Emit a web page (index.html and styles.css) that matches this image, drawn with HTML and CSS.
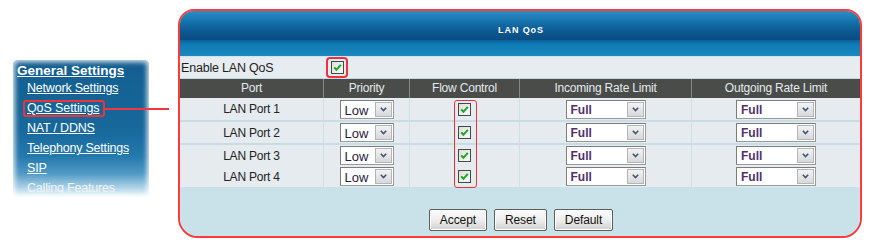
FILE: index.html
```html
<!DOCTYPE html>
<html>
<head>
<meta charset="utf-8">
<title>LAN QoS</title>
<link rel="stylesheet" href="styles.css">
</head>
<body>
<div class="page">
  <nav class="sidebar">
    <a class="nav-title">General Settings</a>
    <ul class="nav-list">
      <li><a>Network Settings</a></li>
      <li><a class="hl">QoS Settings<span class="callout"></span></a></li>
      <li><a>NAT / DDNS</a></li>
      <li><a>Telephony Settings</a></li>
      <li><a>SIP</a></li>
      <li><a class="faded">Calling Features</a></li>
    </ul>
  </nav>

  <section class="panel">
    <div class="panel-head"><h1>LAN QoS</h1></div>
    <div class="panel-band"></div>

    <div class="enable-row">
      <span class="enable-label">Enable LAN QoS</span>
      <span class="mark-box">
        <svg class="cb" width="13" height="13" viewBox="0 0 13 13"><defs><linearGradient id="cbg" x1="0" y1="0" x2="1" y2="1"><stop offset="0" stop-color="#dcdcd6"/><stop offset="1" stop-color="#fbfbfb"/></linearGradient></defs><rect x="0.5" y="0.5" width="12" height="12" fill="url(#cbg)" stroke="#3f4a4a"/><path d="M3.2 6.4 L5.4 8.8 L9.8 3.8" fill="none" stroke="#21a52a" stroke-width="2"/></svg>
      </span>
    </div>

    <div class="qos-table">
      <div class="th">Port</div>
      <div class="th">Priority</div>
      <div class="th">Flow Control</div>
      <div class="th">Incoming Rate Limit</div>
      <div class="th last">Outgoing Rate Limit</div>

      <div class="row r1">
        <div class="td port">LAN Port 1</div>
        <div class="td"><div class="sel sel-pri"><span class="val">Low</span><span class="arr"><svg width="7" height="5" viewBox="0 0 7 5"><path d="M0.8 0.8 L3.5 3.6 L6.2 0.8" fill="none" stroke="#44546a" stroke-width="1.6"/></svg></span></div></div>
        <div class="td"><svg class="cb" width="13" height="13" viewBox="0 0 13 13"><rect x="0.5" y="0.5" width="12" height="12" fill="url(#cbg)" stroke="#3f4a4a"/><path d="M3.2 6.4 L5.4 8.8 L9.8 3.8" fill="none" stroke="#21a52a" stroke-width="2"/></svg></div>
        <div class="td"><div class="sel sel-rate"><span class="val full">Full</span><span class="arr"><svg width="7" height="5" viewBox="0 0 7 5"><path d="M0.8 0.8 L3.5 3.6 L6.2 0.8" fill="none" stroke="#44546a" stroke-width="1.6"/></svg></span></div></div>
        <div class="td last"><div class="sel sel-rate"><span class="val full">Full</span><span class="arr"><svg width="7" height="5" viewBox="0 0 7 5"><path d="M0.8 0.8 L3.5 3.6 L6.2 0.8" fill="none" stroke="#44546a" stroke-width="1.6"/></svg></span></div></div>
      </div>

      <div class="row r2">
        <div class="td port">LAN Port 2</div>
        <div class="td"><div class="sel sel-pri"><span class="val">Low</span><span class="arr"><svg width="7" height="5" viewBox="0 0 7 5"><path d="M0.8 0.8 L3.5 3.6 L6.2 0.8" fill="none" stroke="#44546a" stroke-width="1.6"/></svg></span></div></div>
        <div class="td"><svg class="cb" width="13" height="13" viewBox="0 0 13 13"><rect x="0.5" y="0.5" width="12" height="12" fill="url(#cbg)" stroke="#3f4a4a"/><path d="M3.2 6.4 L5.4 8.8 L9.8 3.8" fill="none" stroke="#21a52a" stroke-width="2"/></svg></div>
        <div class="td"><div class="sel sel-rate"><span class="val full">Full</span><span class="arr"><svg width="7" height="5" viewBox="0 0 7 5"><path d="M0.8 0.8 L3.5 3.6 L6.2 0.8" fill="none" stroke="#44546a" stroke-width="1.6"/></svg></span></div></div>
        <div class="td last"><div class="sel sel-rate"><span class="val full">Full</span><span class="arr"><svg width="7" height="5" viewBox="0 0 7 5"><path d="M0.8 0.8 L3.5 3.6 L6.2 0.8" fill="none" stroke="#44546a" stroke-width="1.6"/></svg></span></div></div>
      </div>

      <div class="row r3">
        <div class="td port">LAN Port 3</div>
        <div class="td"><div class="sel sel-pri"><span class="val">Low</span><span class="arr"><svg width="7" height="5" viewBox="0 0 7 5"><path d="M0.8 0.8 L3.5 3.6 L6.2 0.8" fill="none" stroke="#44546a" stroke-width="1.6"/></svg></span></div></div>
        <div class="td"><svg class="cb" width="13" height="13" viewBox="0 0 13 13"><rect x="0.5" y="0.5" width="12" height="12" fill="url(#cbg)" stroke="#3f4a4a"/><path d="M3.2 6.4 L5.4 8.8 L9.8 3.8" fill="none" stroke="#21a52a" stroke-width="2"/></svg></div>
        <div class="td"><div class="sel sel-rate"><span class="val full">Full</span><span class="arr"><svg width="7" height="5" viewBox="0 0 7 5"><path d="M0.8 0.8 L3.5 3.6 L6.2 0.8" fill="none" stroke="#44546a" stroke-width="1.6"/></svg></span></div></div>
        <div class="td last"><div class="sel sel-rate"><span class="val full">Full</span><span class="arr"><svg width="7" height="5" viewBox="0 0 7 5"><path d="M0.8 0.8 L3.5 3.6 L6.2 0.8" fill="none" stroke="#44546a" stroke-width="1.6"/></svg></span></div></div>
      </div>

      <div class="row r4">
        <div class="td port">LAN Port 4</div>
        <div class="td"><div class="sel sel-pri"><span class="val">Low</span><span class="arr"><svg width="7" height="5" viewBox="0 0 7 5"><path d="M0.8 0.8 L3.5 3.6 L6.2 0.8" fill="none" stroke="#44546a" stroke-width="1.6"/></svg></span></div></div>
        <div class="td"><svg class="cb" width="13" height="13" viewBox="0 0 13 13"><rect x="0.5" y="0.5" width="12" height="12" fill="url(#cbg)" stroke="#3f4a4a"/><path d="M3.2 6.4 L5.4 8.8 L9.8 3.8" fill="none" stroke="#21a52a" stroke-width="2"/></svg></div>
        <div class="td"><div class="sel sel-rate"><span class="val full">Full</span><span class="arr"><svg width="7" height="5" viewBox="0 0 7 5"><path d="M0.8 0.8 L3.5 3.6 L6.2 0.8" fill="none" stroke="#44546a" stroke-width="1.6"/></svg></span></div></div>
        <div class="td last"><div class="sel sel-rate"><span class="val full">Full</span><span class="arr"><svg width="7" height="5" viewBox="0 0 7 5"><path d="M0.8 0.8 L3.5 3.6 L6.2 0.8" fill="none" stroke="#44546a" stroke-width="1.6"/></svg></span></div></div>
      </div>

      <div class="flow-mark"></div>
    </div>

    <div class="actions">
      <button class="btn">Accept</button>
      <button class="btn">Reset</button>
      <button class="btn">Default</button>
    </div>
  </section>
</div>
</body>
</html>
```

FILE: styles.css
```css
html, body {
  margin: 0;
  padding: 0;
  background: #ffffff;
}

body {
  font-family: "Liberation Sans", Arial, sans-serif;
  color: #222;
}

.page {
  display: flex;
  align-items: flex-start;
}

/* ---------- sidebar ---------- */
.sidebar {
  position: relative;
  width: 136px;
  height: 138px;
  margin: 60px 0 0 13px;
  padding: 3px 0 0 4px;
  box-sizing: border-box;
  border-radius: 5px 5px 0 0;
  background: linear-gradient(to bottom,
      #135e90 0%,
      #17689b 50%,
      #2479ad 70%,
      #4f98c4 82%,
      #a9d0e5 92%,
      #ffffff 100%);
  box-shadow: inset 0 0 5px 2px rgba(255, 255, 255, 0.85);
}

.nav-title {
  display: block;
  font-size: 13.5px;
  font-weight: bold;
  line-height: 16px;
  color: #ffffff;
  text-decoration: underline;
}

.nav-list {
  list-style: none;
  margin: 0;
  padding: 0 0 0 10px;
}

.nav-list li {
  height: 20px;
  line-height: 20px;
  font-size: 12.5px;
}

.nav-list li:first-child {
  height: 19px;
  line-height: 19px;
}

.nav-list a {
  color: #ffffff;
  text-decoration: underline;
  letter-spacing: -0.2px;
}

.nav-list a.faded {
  color: #eef6fb;
  text-decoration: none;
}

.nav-list a.hl {
  position: relative;
  display: inline-block;
  margin-left: -4px;
  padding: 0 4px 0 2px;
  line-height: 13px;
  border: 2px solid #f0323c;
  border-radius: 3px;
  vertical-align: middle;
  letter-spacing: -0.1px;
}

.callout {
  position: absolute;
  left: 100%;
  top: 6px;
  margin-left: 2px;
  width: 64px;
  height: 2px;
  background: #f23640;
}

/* ---------- panel ---------- */
.panel {
  width: 684px;
  height: 229px;
  margin: 9px 0 0 29px;
  box-sizing: border-box;
  border: 2px solid #ff3a3a;
  border-radius: 16px 16px 20px 20px;
  overflow: hidden;
  display: flex;
  flex-direction: column;
  background: #c9e1e8;
}

.panel-head {
  height: 29px;
  display: flex;
  align-items: flex-end;
  justify-content: center;
  background: linear-gradient(to bottom,
      #2b8ec4 0%,
      #1673ad 35%,
      #0c5891 70%,
      #0a4c82 100%);
}

.panel-head h1 {
  margin: 0 0 5px 2px;
  font-size: 9px;
  font-weight: bold;
  letter-spacing: 0.9px;
  color: #ffffff;
  line-height: 10px;
}

.panel-band {
  height: 16px;
  background: linear-gradient(to bottom, #0b5f99 0%, #0f7ab3 25%, #1a89c0 100%);
  border-bottom: 1px solid #cfe3ec;
}

.enable-row {
  height: 21px;
  display: flex;
  align-items: center;
  background: #e6ecef;
  border-bottom: 1px solid #c6d8e0;
}

.enable-label {
  width: 146px;
  padding-left: 1px;
  box-sizing: border-box;
  font-size: 12.5px;
  letter-spacing: -0.2px;
  color: #1e1e1e;
}

.mark-box {
  width: 22px;
  height: 21px;
  box-sizing: border-box;
  border: 2px solid #f0323c;
  border-radius: 4px;
  display: flex;
  align-items: center;
  justify-content: center;
}

.cb {
  display: block;
}

/* ---------- table ---------- */
.qos-table {
  position: relative;
  display: grid;
  grid-template-columns: 144px 86px 110px 172px 168px;
  background: #e5ebee;
}

.th {
  height: 19px;
  line-height: 19px;
  text-align: center;
  font-size: 12px;
  color: #e3eaee;
  background: #4a4c49;
  border-right: 1px solid #858784;
  letter-spacing: -0.2px;
}

.th.last {
  border-right: none;
}

.row {
  display: contents;
}

.td {
  display: flex;
  align-items: center;
  justify-content: center;
  border-right: 1px solid #cddfe7;
  box-sizing: border-box;
}

.td.last {
  border-right: none;
}

.r1 .td { height: 24px; border-bottom: 2px solid #c8dce5; }
.r2 .td { height: 23px; border-bottom: 2px solid #c8dce5; }
.r3 .td { height: 21px; }
.r4 .td { height: 21px; }

.td.port {
  font-size: 12px;
  color: #222;
  letter-spacing: -0.2px;
}

.sel {
  height: 19px;
  box-sizing: border-box;
  display: flex;
  align-items: stretch;
  background: #ffffff;
  border: 1px solid #9a9a9a;
  border-top-color: #7c7c7c;
  border-left-color: #7c7c7c;
}

.sel-pri {
  width: 54px;
}

.sel-rate {
  width: 80px;
}

.sel .val {
  flex: 1;
  padding-left: 4px;
  font-size: 13px;
  line-height: 19px;
  color: #2a1a3a;
}

.sel .val.full {
  font-weight: bold;
  font-size: 12px;
  color: #52306e;
}

.sel .arr {
  width: 15px;
  margin: 1px 1px 1px 0;
  display: flex;
  align-items: center;
  justify-content: center;
  background: linear-gradient(to bottom, #f1f2f3, #d6d9dc);
  border: 1px solid #b3b6b9;
}

.flow-mark {
  position: absolute;
  left: 274px;
  top: 21px;
  width: 23px;
  height: 88px;
  box-sizing: border-box;
  border: 1.5px solid #f0323c;
  border-radius: 3px;
}

/* ---------- actions ---------- */
.actions {
  flex: 1;
  display: flex;
  justify-content: center;
  align-items: flex-start;
  gap: 7px;
  padding-top: 22px;
  padding-left: 2px;
  background: #c9e1e8;
}

.btn {
  height: 22px;
  padding: 0 10px;
  font-family: "Liberation Sans", Arial, sans-serif;
  font-size: 12px;
  color: #111;
  border: 1px solid #5e5e5e;
  border-radius: 2px;
  background: linear-gradient(to bottom, #fdfdfd 0%, #ececec 55%, #cfcfcf 100%);
  box-shadow: inset 0 0 0 1px #ffffff;
  letter-spacing: -0.1px;
}
```
